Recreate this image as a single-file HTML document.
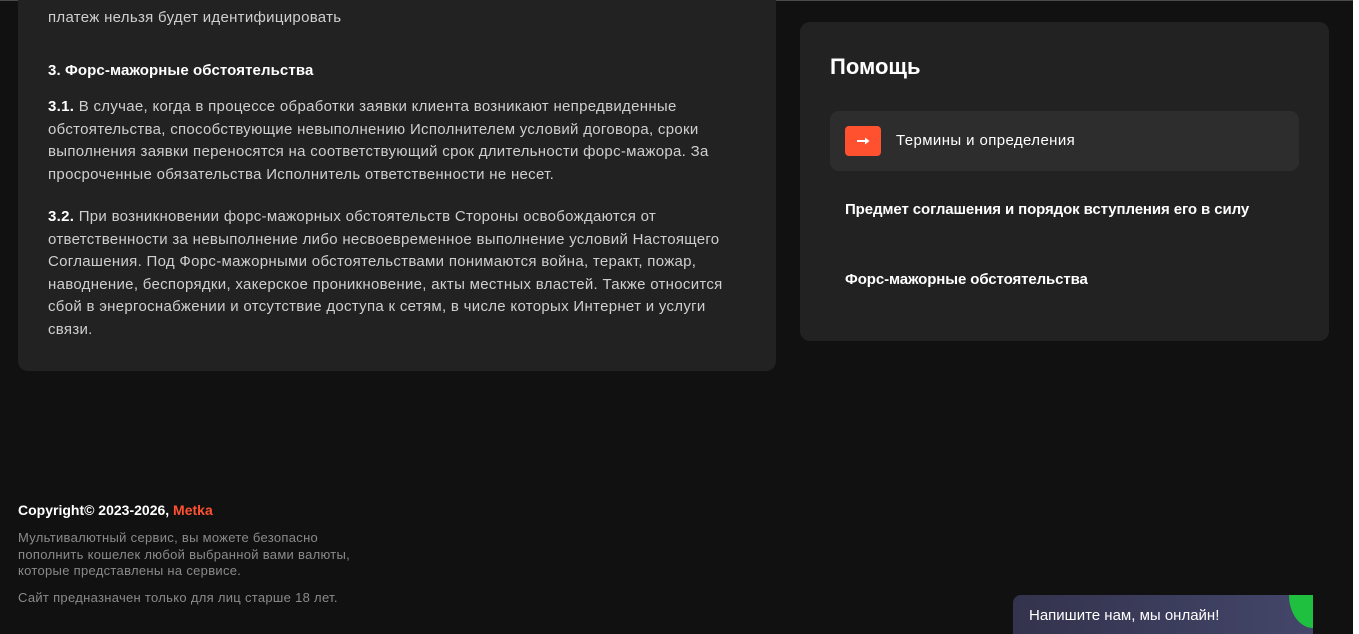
<!DOCTYPE html>
<html><head><meta charset="utf-8"><style>
*{margin:0;padding:0;box-sizing:border-box}
html,body{width:1359px;height:634px;overflow:hidden;background:#fff}
body{font-family:"Liberation Sans",sans-serif;position:relative}
.page{position:absolute;left:0;top:0;width:1353px;height:634px;background:#111111;border-top:1px solid #4a4a4a}
.card{position:absolute;background:#222222;border-radius:10px}
.l{left:18px;top:-20px;width:758px;height:390px}
.r{left:800px;top:21px;width:529px;height:319px}
.t{position:absolute;left:30px;color:#cfcfcf;font-size:15px;line-height:22.5px;white-space:nowrap;letter-spacing:0.3px}
.t b{color:#fff}
h3{position:absolute;left:30px;top:81px;color:#fff;font-size:15px;font-weight:bold;letter-spacing:0.1px}
h2{position:absolute;left:30px;top:32px;color:#fff;font-size:22px;font-weight:bold}
.item{position:absolute;left:30px;width:469px;height:60px;border-radius:9px;color:#fff;font-size:15px;font-weight:bold;letter-spacing:-0.1px;line-height:60px;padding-left:15px}
.act{background:#2d2d2d;padding-left:66px;font-weight:normal;letter-spacing:0.4px}
.ic{position:absolute;left:15px;top:15px;width:36px;height:30px;background:#ff512f;border-radius:4px}
.ic svg{display:block}
.foot{position:absolute;left:18px;color:#8a8a8a;font-size:13px;line-height:16.5px;letter-spacing:0.3px}
.chat{position:absolute;left:1013px;top:594px;width:300px;height:40px;border-radius:8px 0 0 0;background:linear-gradient(90deg,#33334d,#44466a);color:#fff;font-size:15px;padding:12px 0 0 16px;overflow:hidden}
.leaf{position:absolute;right:0;top:0;width:24px;height:33px;background:#1fbf3f;border-bottom-left-radius:100% 100%}
</style></head><body><div class="page">
<div class="card l">
<div class="t" style="top:26px">платеж нельзя будет идентифицировать</div>
<h3>3. Форс-мажорные обстоятельства</h3>
<div class="t" style="top:115px"><b>3.1.</b> В случае, когда в процессе обработки заявки клиента возникают непредвиденные<br>обстоятельства, способствующие невыполнению Исполнителем условий договора, сроки<br>выполнения заявки переносятся на соответствующий срок длительности форс-мажора. За<br>просроченные обязательства Исполнитель ответственности не несет.</div>
<div class="t" style="top:225px"><b>3.2.</b> При возникновении форс-мажорных обстоятельств Стороны освобождаются от<br>ответственности за невыполнение либо несвоевременное выполнение условий Настоящего<br>Соглашения. Под Форс-мажорными обстоятельствами понимаются война, теракт, пожар,<br>наводнение, беспорядки, хакерское проникновение, акты местных властей. Также относится<br>сбой в энергоснабжении и отсутствие доступа к сетям, в числе которых Интернет и услуги<br>связи.</div>
</div>
<div class="card r">
<h2>Помощь</h2>
<div class="item act" style="top:89px"><div class="ic"><svg width="36" height="30"><path d="M12 15H21" stroke="#fff" stroke-width="2"/><path d="M20 11.5L24.5 15L20 18.5Z" fill="#fff"/></svg></div>Термины и определения</div>
<div class="item" style="top:158px">Предмет соглашения и порядок вступления его в силу</div>
<div class="item" style="top:228px">Форс-мажорные обстоятельства</div>
</div>
<div class="foot" style="top:501px;color:#fff;font-size:14px;font-weight:bold;letter-spacing:0">Copyright© 2023-2026, <span style="color:#ff512f">Metka</span></div>
<div class="foot" style="top:529px">Мультивалютный сервис, вы можете безопасно<br>пополнить кошелек любой выбранной вами валюты,<br>которые представлены на сервисе.</div>
<div class="foot" style="top:589px">Сайт предназначен только для лиц старше 18 лет.</div>
<div class="chat">Напишите нам, мы онлайн!<div class="leaf"></div></div>
</div></body></html>
